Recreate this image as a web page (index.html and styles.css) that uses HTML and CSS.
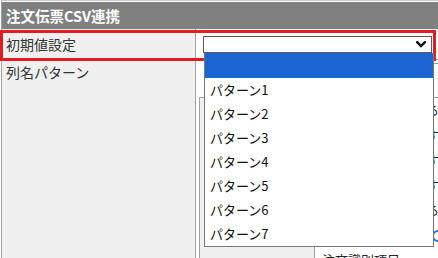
FILE: index.html
```html
<!DOCTYPE html>
<html lang="ja">
<head>
<meta charset="utf-8">
<link rel="stylesheet" href="styles.css">
</head>
<body>
<div class="page">
  <div class="panel">
    <div class="panel-head">注文伝票CSV連携</div>
    <div class="row r1">
      <div class="label">初期値設定</div>
      <div class="value">
        <div class="select">
          <svg class="chev" width="10" height="7" viewBox="0 0 10 7"><path d="M1.2 1.2 L5 5 L8.8 1.2" fill="none" stroke="#111" stroke-width="2.4" stroke-linecap="square"/></svg>
        </div>
      </div>
    </div>
    <div class="row r2">
      <div class="label">列名パターン</div>
      <div class="value v2">
        <div class="topbox"></div>
        <div class="sub">
          <div class="sub-row"><div class="sub-label"></div><div class="sub-value">受注番号を出力する項目</div></div>
          <div class="sub-row"><div class="sub-label"></div><div class="sub-value">出荷予定日を出力する項</div></div>
          <div class="sub-row"><div class="sub-label"></div><div class="sub-value">届け先住所を出力する項</div></div>
          <div class="sub-row"><div class="sub-label"></div><div class="sub-value">商品コードを出力する項</div></div>
          <div class="sub-row"><div class="sub-label"></div><div class="sub-value">数量単価を出力する項目</div></div>
          <div class="sub-row"><div class="sub-label"></div><div class="sub-value">区分を選択する項<span class="radio"></span></div></div>
          <div class="sub-row"><div class="sub-label"></div><div class="sub-value last">注文識別項目</div></div>
        </div>
      </div>
    </div>
  </div>
  <div class="highlight"></div>
  <ul class="listbox">
    <li class="opt selected"></li>
    <li class="opt">パターン1</li>
    <li class="opt">パターン2</li>
    <li class="opt">パターン3</li>
    <li class="opt">パターン4</li>
    <li class="opt">パターン5</li>
    <li class="opt">パターン6</li>
    <li class="opt">パターン7</li>
  </ul>
</div>
</body>
</html>
```

FILE: styles.css
```css
html, body {
  margin: 0;
  padding: 0;
  overflow: hidden;
  background: #ffffff;
}
body {
  font-family: "Noto Sans CJK JP", "Noto Sans", sans-serif;
  color: #222;
  width: 438px;
  height: 258px;
}
.page {
  position: relative;
  width: 438px;
  height: 258px;
  overflow: hidden;
  padding-left: 1px;
  box-sizing: border-box;
}
.panel {
  width: 460px;
  border-left: 1px solid #a0a0a0;
  border-top: 1px solid #c8c8c8;
  padding-top: 1px;
}
.panel-head {
  height: 27px;
  background: #808080;
  color: #ffffff;
  font-weight: bold;
  font-size: 14.5px;
  line-height: 27px;
  padding-left: 4px;
}
.row {
  display: flex;
}
.r1 {
  height: 30px;
  border-bottom: 1px solid #a0a0a0;
}
.label {
  width: 194px;
  flex: none;
  background: #f0f0f0;
  border-right: 1px solid #a0a0a0;
  font-size: 14px;
  line-height: 18px;
  padding-left: 4px;
  box-sizing: border-box;
  color: #333;
}
.r1 .label {
  display: flex;
  align-items: center;
}
.r1 .value {
  display: flex;
  align-items: center;
  padding-left: 7px;
}
.select {
  width: 229px;
  height: 17px;
  box-sizing: border-box;
  border: 1px solid #5a5a5a;
  background: #fff;
  display: flex;
  align-items: center;
  justify-content: flex-end;
  padding-right: 5px;
}
.chev {
  display: block;
}
.r2 .label {
  padding-top: 3px;
  height: 200px;
}
.v2 {
  padding: 2px 0 0 3px;
}
.topbox {
  height: 33px;
  margin-left: 10px;
  border-top: 1px solid #a0a0a0;
  margin-top: 1px;
}
.sub {
  border: 1px solid #a0a0a0;
  border-right: none;
  width: 260px;
}
.sub-row {
  display: flex;
  height: 25px;
}
.sub-row:first-child {
  height: 24px;
}
.sub-label {
  width: 114px;
  background: #f0f0f0;
  border-right: 1px solid #a0a0a0;
  flex: none;
}
.sub-value {
  padding-left: 7px;
  font-size: 13px;
  line-height: 25px;
  white-space: nowrap;
  color: #222;
}
.sub-row:first-child .sub-value {
  line-height: 24px;
}
.sub-value.last {
  line-height: 18px;
  padding-top: 4px;
}
.radio {
  display: inline-block;
  width: 8px;
  height: 8px;
  border: 2px solid #1a73e8;
  border-radius: 50%;
  vertical-align: middle;
  margin-left: 6px;
}
.highlight {
  position: absolute;
  left: 0;
  top: 30px;
  width: 436px;
  height: 31px;
  box-sizing: border-box;
  border: 3px solid #e31b23;
}
.listbox {
  position: absolute;
  left: 204px;
  top: 53px;
  width: 230px;
  margin: 0;
  padding: 0;
  list-style: none;
  box-sizing: border-box;
  border: 1px solid #767676;
  border-top: none;
  background: #ffffff;
}
.opt {
  height: 24px;
  line-height: 24px;
  font-size: 13px;
  padding-left: 5px;
  color: #111;
  white-space: nowrap;
}
.opt.selected {
  height: 25px;
  background: #1b66d2;
}
```
